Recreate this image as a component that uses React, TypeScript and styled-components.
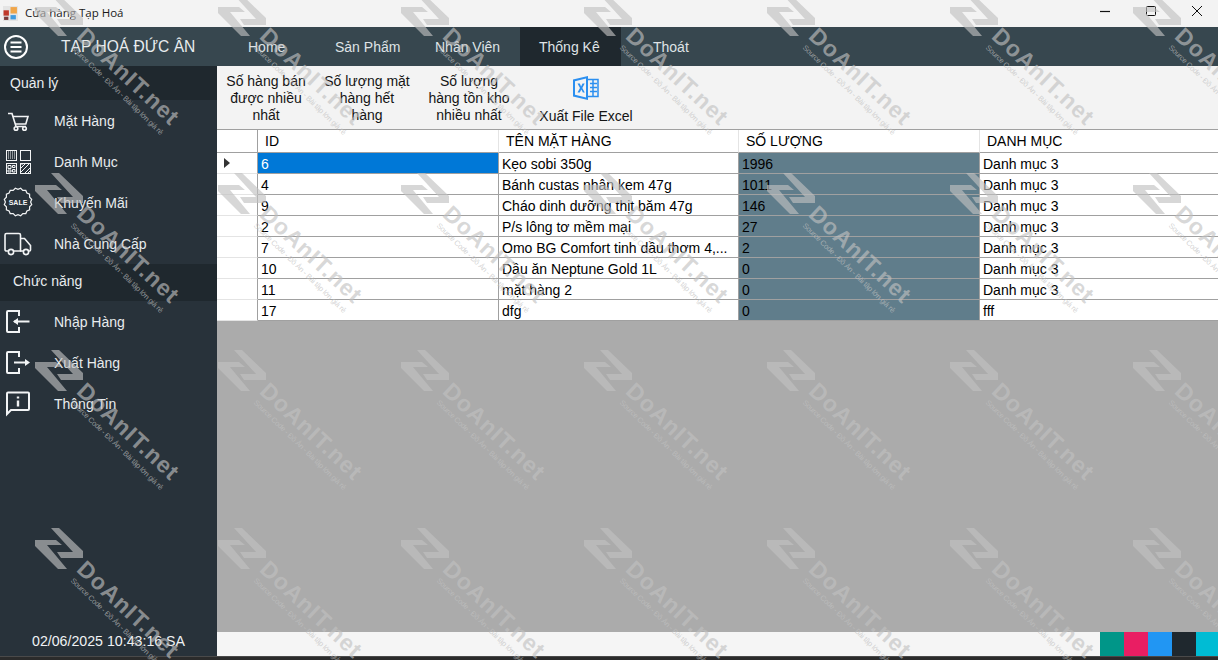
import React from "react";
import styled, { createGlobalStyle } from "styled-components";

const Global = createGlobalStyle`
  html, body { margin: 0; padding: 0; height: 660px; overflow: hidden; background: #2b2b2b; }
  #root { height: 660px; }
  * { box-sizing: border-box; }
`;

const Window = styled.div`
  position: relative;
  width: 1218px;
  height: 660px;
  overflow: hidden;
  display: flex;
  flex-direction: column;
  font-family: "Liberation Sans", Arial, sans-serif;
`;
const TitleBar = styled.div`
  height: 27px;
  flex: none;
  background: #f3f3f3;
  display: flex;
  align-items: center;
  padding: 0 0 0 3px;
  font-family: "Open Sans", "Noto Sans", sans-serif;
  font-size: 11.5px;
  color: #1a1a1a;
`;
const TitleText = styled.span`
  margin-left: 7px;
  flex: 1;
  position: relative;
  top: -1px;
`;
const WinButtons = styled.div`
  display: flex;
  align-items: flex-start;
  height: 27px;
  margin-right: -2px;
`;
const WinButton = styled.div`
  width: 46px;
  height: 22px;
  display: flex;
  align-items: center;
  justify-content: center;
`;
const Header = styled.div`
  height: 39px;
  flex: none;
  background: #37474f;
  display: flex;
  align-items: stretch;
`;
const MenuToggle = styled.div`
  width: 61px;
  padding-left: 4px;
  display: flex;
  align-items: center;
`;
const Brand = styled.div`
  width: 168px;
  display: flex;
  align-items: center;
  font-size: 15.6px;
  color: #e8ecee;
  white-space: nowrap;
`;
const Tabs = styled.div`
  display: grid;
  grid-template-columns: 87px 100px 104px 101px 100px;
`;
const Tab = styled.div<{ $active?: boolean; $pad?: number }>`
  display: flex;
  align-items: center;
  padding-left: ${(p) => p.$pad ?? 19}px;
  font-size: 14px;
  color: #dfe3e6;
  white-space: nowrap;
  background: ${(p) => (p.$active ? "#1f282e" : "transparent")};
`;
const Body = styled.div`
  flex: 1;
  min-height: 0;
  display: flex;
`;
const Sidebar = styled.div`
  width: 217px;
  flex: none;
  background: #28323a;
  display: flex;
  flex-direction: column;
  color: #e8ecee;
`;
const Section = styled.div<{ $h: number; $pad: number; $lift?: number }>`
  height: ${(p) => p.$h}px;
  padding-left: ${(p) => p.$pad}px;
  padding-bottom: ${(p) => p.$lift ?? 0}px;
  background: #1f282e;
  display: flex;
  align-items: center;
  font-size: 14px;
`;
const MenuRow = styled.div`
  height: 41px;
  display: flex;
  align-items: center;
  font-size: 14px;
  svg { flex: none; margin-right: 18px; }
`;
const Clock = styled.div`
  margin-top: auto;
  padding: 0 0 7px 32px;
  font-size: 14.2px;
  line-height: 16px;
  color: #f0f2f4;
`;
const Main = styled.div`
  flex: 1;
  min-width: 0;
  display: flex;
  flex-direction: column;
  background: #ababab;
`;
const Toolbar = styled.div`
  height: 63px;
  flex: none;
  background: #f3f3f3;
  display: flex;
`;
const ToolButton = styled.div<{ $w: number }>`
  width: ${(p) => p.$w}px;
  padding: 7px 0 0;
  text-align: center;
  font-size: 14px;
  line-height: 17px;
  color: #151515;
  white-space: nowrap;
`;
const ExcelButton = styled.div<{ $w: number }>`
  width: ${(p) => p.$w}px;
  display: flex;
  flex-direction: column;
  align-items: center;
  padding-top: 9px;
  font-size: 14px;
  line-height: 17px;
  color: #151515;
  span { margin-top: 7px; }
`;
const Table = styled.div`
  flex: none;
  display: grid;
  grid-template-columns: 41px 241px 240px 241px 239px;
  grid-auto-rows: 21px;
  background: #fff;
  border-top: 1px solid #a0a0a0;
  font-size: 14px;
  color: #000;
`;
const HeadCell = styled.div<{ $corner?: boolean }>`
  height: 23px;
  margin-bottom: -2px;
  padding: 3px 0 0 7px;
  line-height: 17px;
  background: #fff;
  border-bottom: 1px solid #a0a0a0;
  border-right: 1px solid ${(p) => (p.$corner ? "#a0a0a0" : "#e4e4e4")};
  white-space: nowrap;
`;
const RowHead = styled.div`
  background: #fff;
  border-bottom: 1px solid #e4e4e4;
  border-right: 1px solid #a0a0a0;
  display: flex;
  align-items: center;
  padding-left: 7px;
  transform: translateY(2px);
`;
const Cell = styled.div<{ $selected?: boolean; $tinted?: boolean; $last?: boolean }>`
  padding: 3px 0 0 3px;
  line-height: 16px;
  white-space: nowrap;
  overflow: hidden;
  border-bottom: 1px solid #a0a0a0;
  border-right: ${(p) => (p.$last ? "0" : "1px solid #a0a0a0")};
  background: ${(p) => (p.$selected ? "#0078d7" : p.$tinted ? "#607d8b" : "#fff")};
  color: ${(p) => (p.$selected ? "#fff" : "#000")};
  transform: translateY(2px);
`;
const Empty = styled.div`
  flex: 1;
`;
const StatusBar = styled.div`
  height: 24px;
  flex: none;
  background: #f5f5f5;
  display: flex;
  justify-content: flex-end;
  margin-right: -2px;
`;
const Swatch = styled.div<{ $c: string }>`
  width: 24px;
  background: ${(p) => p.$c};
`;
const BottomStrip = styled.div`
  height: 4px;
  flex: none;
  background: #2b2b2b;
  border-top: 1px solid #4a4a4a;
`;

const Overlay = styled.div`
  position: absolute;
  left: -154px;
  top: -10px;
  pointer-events: none;
  display: grid;
  grid-template-columns: repeat(8, 183px);
  grid-auto-rows: 177.5px;
`;
const Mark = styled.div`
  position: relative;
  svg { display: block; }
`;
const MarkName = styled.div`
  position: absolute;
  left: 52px;
  top: 29px;
  font-weight: 700;
  font-size: 23px;
  line-height: 26px;
  letter-spacing: 1px;
  white-space: nowrap;
  color: rgba(193, 193, 193, 0.64);
  transform-origin: 0 50%;
  transform: rotate(43deg);
`;
const MarkSub = styled.div`
  position: absolute;
  left: 43px;
  top: 51px;
  font-size: 7.5px;
  line-height: 11px;
  letter-spacing: -0.25px;
  white-space: nowrap;
  color: rgba(193, 193, 193, 0.7);
  transform-origin: 0 50%;
  transform: rotate(44deg);
`;

const WaterLogo = () => (
  <svg width="60" height="50" viewBox="0 0 60 50">
    <path
      fill="rgba(193,193,193,0.64)"
      d="M22 5H30L54 28V35H32L28 29H44ZM6 17H27L33 22H18L38 46H29L6 23Z"
    />
  </svg>
);

const tiles = Array.from({ length: 32 });
const Watermark = () => (
  <Overlay>
    {tiles.map((_, i) => (
      <Mark key={i}>
        <WaterLogo />
        <MarkName>DoAnIT.net</MarkName>
        <MarkSub>Source Code - Đồ Án - Bài tập lớn giá rẻ</MarkSub>
      </Mark>
    ))}
  </Overlay>
);

const Ic = ({ children }: { children: React.ReactNode }) => (
  <svg width="36" height="41" viewBox="0 0 36 41" fill="none" stroke="#f2f4f5" strokeWidth="1.6">
    {children}
  </svg>
);

const scallop = (() => {
  const pts: string[] = [];
  for (let i = 0; i < 32; i++) {
    const r = i % 2 ? 14 : 12.6;
    const a = (i / 32) * Math.PI * 2;
    pts.push(`${(18 + r * Math.cos(a)).toFixed(1)},${(20 + r * Math.sin(a)).toFixed(1)}`);
  }
  return pts.join(" ");
})();

const CartIcon = () => (
  <Ic>
    <path d="M8 13.5h4l4 13h10" />
    <path d="M13 16.5h15l-2.2 7.5H15" />
    <circle cx="16" cy="28.5" r="1.8" />
    <circle cx="24.500" cy="28.5" r="1.8" />
  </Ic>
);
const GridIcon = () => (
  <Ic>
    <g strokeWidth="1">
      <rect x="6.5" y="9.5" width="10" height="10" />
      <rect x="20.5" y="9.5" width="10" height="10" />
      <rect x="6.5" y="22.5" width="10" height="10" />
      <rect x="20.5" y="22.5" width="10" height="10" />
      <path d="M8 11h7M8 13h7M8 15h7M8 17h7" strokeDasharray="1 1" />
      <path d="M8 24.5h3v3H8zM12.5 24.5h2.5v2h-2.5zM8 29h3v2H8zM12.5 28.5h2.5v2.5h-2.5z" />
      <path d="M21 27l5-5M21 31l9-9M25 32l5-5M21.5 24l2-2M28 32l2-2" />
    </g>
  </Ic>
);
const SaleIcon = () => (
  <Ic>
    <polygon points={scallop} strokeWidth="1.2" />
    <text x="18" y="22.5" textAnchor="middle" fontFamily="Liberation Sans, sans-serif" fontWeight="700" fontSize="7" fill="#f2f4f5" stroke="none">
      SALE
    </text>
  </Ic>
);
const TruckIcon = () => (
  <Ic>
    <path d="M8 28H6.5a1.5 1.5 0 0 1-1.5-1.5V12a1.5 1.5 0 0 1 1.5-1.5H19a1.5 1.5 0 0 1 1.5 1.5V28H14" />
    <path d="M20.5 15.5h4l6 7V27a1 1 0 0 1-1 1H29M23 28h-3" />
    <circle cx="11" cy="29" r="2.6" />
    <circle cx="26" cy="29" r="2.6" />
  </Ic>
);
const DoorIn = () => (
  <Ic>
    <path strokeWidth="2" d="M19 15V10H8a1 1 0 0 0-1 1v19a1 1 0 0 0 1 1h11v-5" />
    <path strokeWidth="2" d="M29.5 20.5H14" />
    <path fill="#f2f4f5" stroke="none" d="M13 20.5l5-3.5v7z" />
  </Ic>
);
const DoorOut = () => (
  <Ic>
    <path strokeWidth="2" d="M19 15V10H8a1 1 0 0 0-1 1v19a1 1 0 0 0 1 1h11v-5" />
    <path strokeWidth="2" d="M14 20.5h13" />
    <path fill="#f2f4f5" stroke="none" d="M30 20.5l-5-3.5v7z" />
  </Ic>
);
const InfoIcon = () => (
  <Ic>
    <path strokeWidth="2" d="M7 31V10.5a1 1 0 0 1 1-1h20a1 1 0 0 1 1 1V26a1 1 0 0 1-1 1H11z" />
    <path strokeWidth="2.4" d="M18 13.5v2M18 17.5v6" />
  </Ic>
);

const ExcelIcon = () => (
  <svg width="26" height="26" viewBox="0 0 26 26">
    <path fill="#2b8ff0" d="M0 4.5 15 1v24L0 21.5z" />
    <path fill="#f3f3f3" d="M2 6.2 13 3.6v18.8L2 19.8z" />
    <path fill="#2b8ff0" d="M4.5 8.5h2.3l1.3 3 1.4-3h2.2l-2.4 4.4 2.5 4.7H9.9l-1.6-3.2-1.5 3.2H4.5l2.5-4.6z" />
    <path fill="none" stroke="#2b8ff0" strokeWidth="1.5" d="M15 4.5h10v17H15M17 8.5h7M17 12.5h7M17 16.5h7M20 5v16" />
  </svg>
);

const AppIcon = () => (
  <svg width="15" height="15" viewBox="0 0 14 14">
    <rect x="0" y="0" width="14" height="14" fill="#e4e4e4" />
    <rect x="0.5" y="4" width="5" height="5" fill="#c0392b" />
    <rect x="7" y="1" width="6" height="6" fill="#f0a64a" />
    <rect x="7" y="8.5" width="5" height="4" fill="#3f9be0" />
    <rect x="1" y="10" width="4" height="3" fill="#7a3b3b" />
  </svg>
);

const rows = [
  ["6", "Kẹo sobi 350g", "1996", "Danh mục 3"],
  ["4", "Bánh custas nhân kem 47g", "1011", "Danh mục 3"],
  ["9", "Cháo dinh dưỡng thịt băm 47g", "146", "Danh mục 3"],
  ["2", "P/s lông tơ mềm mại", "27", "Danh mục 3"],
  ["7", "Omo BG Comfort tinh dầu thơm 4,...", "2", "Danh mục 3"],
  ["10", "Dầu ăn Neptune Gold 1L", "0", "Danh mục 3"],
  ["11", "mặt hàng 2", "0", "Danh mục 3"],
  ["17", "dfg", "0", "fff"],
];

export default function App() {
  return (
    <Window>
      <Global />
      <TitleBar>
        <AppIcon />
        <TitleText>Cửa hàng Tạp Hoá</TitleText>
        <WinButtons>
          <WinButton>
            <svg width="12" height="12" viewBox="0 0 12 12"><path d="M1 6.5h10" stroke="#111" strokeWidth="1.2" /></svg>
          </WinButton>
          <WinButton>
            <svg width="12" height="12" viewBox="0 0 12 12"><rect x="1.5" y="1.5" width="9" height="9" rx="1" fill="none" stroke="#111" /></svg>
          </WinButton>
          <WinButton>
            <svg width="12" height="12" viewBox="0 0 12 12"><path d="M1 1l10 10M11 1L1 11" stroke="#111" /></svg>
          </WinButton>
        </WinButtons>
      </TitleBar>
      <Header>
        <MenuToggle>
          <svg width="24" height="24" viewBox="0 0 24 24" fill="none" stroke="#fff">
            <circle cx="12" cy="12" r="11" strokeWidth="2" />
            <path strokeWidth="2" d="M6.5 7.5h11M6.5 12h11M6.5 16.500h11" />
          </svg>
        </MenuToggle>
        <Brand>TẠP HOÁ ĐỨC ÂN</Brand>
        <Tabs>
          <Tab>Home</Tab>
          <Tab>Sản Phẩm</Tab>
          <Tab>Nhân Viên</Tab>
          <Tab $active>Thống Kê</Tab>
          <Tab $pad={32}>Thoát</Tab>
        </Tabs>
      </Header>
      <Body>
        <Sidebar>
          <Section $h={34} $pad={10}>Quản lý</Section>
          <MenuRow><CartIcon />Mặt Hàng</MenuRow>
          <MenuRow><GridIcon />Danh Mục</MenuRow>
          <MenuRow><SaleIcon />Khuyến Mãi</MenuRow>
          <MenuRow><TruckIcon />Nhà Cung Cấp</MenuRow>
          <Section $h={37} $pad={13} $lift={3}>Chức năng</Section>
          <MenuRow><DoorIn />Nhập Hàng</MenuRow>
          <MenuRow><DoorOut />Xuất Hàng</MenuRow>
          <MenuRow><InfoIcon />Thông Tin</MenuRow>
          <Clock>02/06/2025 10:43:16 SA</Clock>
        </Sidebar>
        <Main>
          <Toolbar>
            <ToolButton $w={98}>Số hàng bán<br />được nhiều<br />nhất</ToolButton>
            <ToolButton $w={104}>Số lượng mặt<br />hàng hết<br />hàng</ToolButton>
            <ToolButton $w={100}>Số lượng<br />hàng tồn kho<br />nhiều nhất</ToolButton>
            <ExcelButton $w={134}>
              <ExcelIcon />
              <span>Xuất File Excel</span>
            </ExcelButton>
          </Toolbar>
          <Table>
            <HeadCell $corner />
            <HeadCell>ID</HeadCell>
            <HeadCell>TÊN MẶT HÀNG</HeadCell>
            <HeadCell>SỐ LƯỢNG</HeadCell>
            <HeadCell>DANH MỤC</HeadCell>
            {rows.map((r, i) => (
              <React.Fragment key={i}>
                <RowHead>
                  {i === 0 && (
                    <svg width="6" height="10" viewBox="0 0 6 10"><path d="M0 0l6 5-6 5z" fill="#333" /></svg>
                  )}
                </RowHead>
                <Cell $selected={i === 0}>{r[0]}</Cell>
                <Cell>{r[1]}</Cell>
                <Cell $tinted>{r[2]}</Cell>
                <Cell $last>{r[3]}</Cell>
              </React.Fragment>
            ))}
          </Table>
          <Empty />
          <StatusBar>
            <Swatch $c="#009688" />
            <Swatch $c="#e91e63" />
            <Swatch $c="#2196f3" />
            <Swatch $c="#1f282e" />
            <Swatch $c="#00bcd4" />
          </StatusBar>
        </Main>
      </Body>
      <BottomStrip />
      <Watermark />
    </Window>
  );
}
